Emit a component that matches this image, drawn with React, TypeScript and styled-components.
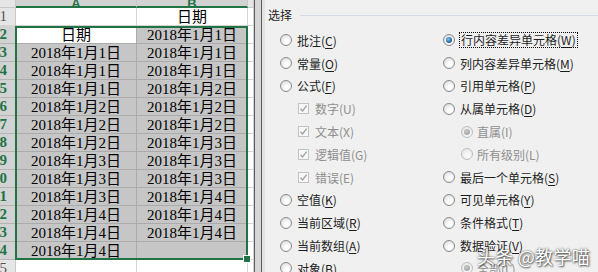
import React from "react";
import styled, { createGlobalStyle } from "styled-components";

const GlobalStyle = createGlobalStyle`
  html, body {
    margin: 0;
    padding: 0;
    background: #ffffff;
  }
`;

const colA = [
  "",
  "日期",
  "2018年1月1日",
  "2018年1月1日",
  "2018年1月1日",
  "2018年1月2日",
  "2018年1月2日",
  "2018年1月2日",
  "2018年1月3日",
  "2018年1月3日",
  "2018年1月3日",
  "2018年1月4日",
  "2018年1月4日",
  "2018年1月4日",
  "",
];

const colB = [
  "日期",
  "2018年1月1日",
  "2018年1月1日",
  "2018年1月1日",
  "2018年1月2日",
  "2018年1月2日",
  "2018年1月2日",
  "2018年1月3日",
  "2018年1月3日",
  "2018年1月3日",
  "2018年1月4日",
  "2018年1月4日",
  "2018年1月4日",
  "",
  "",
];

const GREEN = "#217346";

const Page = styled.div`
  display: flex;
  width: 598px;
  height: 272px;
  overflow: hidden;
  position: relative;
  background: #ffffff;
`;

const Sheet = styled.div`
  position: relative;
  flex: 0 0 254px;
  display: grid;
  grid-template-columns: 16px 121px 111px 6px;
  grid-template-rows: 8px repeat(14, 18px) 18px;
  font-family: "Liberation Serif", "Noto Sans CJK SC", serif;
`;

const Corner = styled.div`
  background: #e6e6e6;
  border-right: 1px solid #c8c8c8;
  border-bottom: 1px solid #c8c8c8;
  box-sizing: border-box;
`;

const ColHead = styled.div<{ $sel?: boolean }>`
  box-sizing: border-box;
  background: ${(p) => (p.$sel ? "#d2d2d2" : "#e6e6e6")};
  border-right: 1px solid #c8c8c8;
  border-bottom: ${(p) => (p.$sel ? `2px solid ${GREEN}` : "1px solid #c8c8c8")};
  color: ${(p) => (p.$sel ? GREEN : "#444")};
  font-family: "Liberation Sans", sans-serif;
  font-weight: bold;
  font-size: 13px;
  display: flex;
  justify-content: center;
  align-items: flex-end;
  overflow: hidden;
  line-height: 13px;
  span {
    margin-bottom: -4px;
  }
`;

const RowHead = styled.div<{ $sel?: boolean }>`
  box-sizing: border-box;
  background: ${(p) => (p.$sel ? "#d2d2d2" : "#e6e6e6")};
  border-right: 1px solid ${(p) => (p.$sel ? GREEN : "#c8c8c8")};
  border-bottom: 1px solid ${(p) => (p.$sel ? "#b4b4b4" : "#d4d4d4")};
  color: ${(p) => (p.$sel ? GREEN : "#555")};
  font-weight: ${(p) => (p.$sel ? "bold" : "normal")};
  font-size: 15px;
  display: flex;
  justify-content: flex-end;
  align-items: center;
  padding-right: 8px;
  overflow: hidden;
  white-space: nowrap;
`;

const Cell = styled.div<{ $sel?: boolean; $active?: boolean }>`
  box-sizing: border-box;
  background: ${(p) => (p.$sel && !p.$active ? "#c6c6c6" : "#ffffff")};
  border-right: 1px solid ${(p) => (p.$sel ? "#ababab" : "#d4d4d4")};
  border-bottom: 1px solid ${(p) => (p.$sel ? "#ababab" : "#d4d4d4")};
  color: #000;
  font-size: 15px;
  display: flex;
  justify-content: center;
  align-items: center;
  white-space: nowrap;
  overflow: hidden;
  line-height: 18px;
`;

const Selection = styled.div`
  position: absolute;
  left: 15px;
  top: 26px;
  width: 233px;
  height: 234px;
  box-sizing: border-box;
  border: 2px solid ${GREEN};
  pointer-events: none;
`;

const FillHandle = styled.div`
  position: absolute;
  right: -5px;
  bottom: -5px;
  width: 6px;
  height: 6px;
  background: ${GREEN};
  border: 1px solid #ffffff;
`;

const Splitter = styled.div`
  flex: 0 0 8px;
  box-sizing: border-box;
  background: #d6d6d6;
  border-left: 1px solid #5c5c5c;
  border-right: 1px solid #5c5c5c;
`;

const Dialog = styled.div`
  flex: 1;
  background: #f0f0f0;
  border-left: 3px solid #e2e2e2;
  padding: 8px 0 0 3px;
  font-family: "Noto Sans CJK SC", "Liberation Sans", sans-serif;
  font-size: 12px;
  color: #1e1e1e;
`;

const Legend = styled.div`
  display: flex;
  align-items: center;
  gap: 8px;
  height: 14px;
  line-height: 14px;
  &::after {
    content: "";
    flex: 1;
    height: 1px;
    background: #d5dce3;
  }
`;

const Options = styled.div`
  display: grid;
  grid-template-columns: 163px 1fr;
  grid-auto-rows: 22.8px;
  margin-top: 7px;
  padding-left: 12px;
`;

const Item = styled.div<{ $indent?: boolean; $disabled?: boolean }>`
  display: flex;
  align-items: center;
  gap: ${(p) => (p.$indent ? "4px" : "5px")};
  padding-left: ${(p) => (p.$indent ? "18px" : "0")};
  color: ${(p) => (p.$disabled ? "#8f8f8f" : "#1e1e1e")};
  white-space: nowrap;
  u {
    text-decoration-thickness: 1px;
    text-underline-offset: 2px;
  }
`;

const Radio = styled.span<{ $checked?: boolean; $disabled?: boolean }>`
  position: relative;
  flex: 0 0 12px;
  width: 12px;
  height: 12px;
  box-sizing: border-box;
  border-radius: 50%;
  border: 1px solid ${(p) => (p.$disabled ? "#bdbdbd" : "#8a8a8a")};
  background: ${(p) =>
    p.$disabled
      ? "radial-gradient(circle at 60% 65%, #fafafa, #e4e4e4)"
      : "radial-gradient(circle at 60% 65%, #ffffff 20%, #d8d8d8 90%)"};
  &::after {
    content: "";
    display: ${(p) => (p.$checked ? "block" : "none")};
    position: absolute;
    left: 2px;
    top: 2px;
    width: 6px;
    height: 6px;
    border-radius: 50%;
    background: ${(p) =>
      p.$disabled
        ? "radial-gradient(circle at 40% 35%, #c8c8c8, #9a9a9a)"
        : "radial-gradient(circle at 40% 35%, #7cc4f0, #1a5f95 70%, #0c3c63)"};
  }
`;

const Check = styled.span`
  flex: 0 0 11px;
  width: 11px;
  height: 11px;
  box-sizing: border-box;
  border: 1px solid #c3c3c3;
  background: #f7f7f7;
  display: flex;
  align-items: center;
  justify-content: center;
  margin-right: 2px;
`;

const Focus = styled.span`
  outline: 1px dotted #000;
  outline-offset: 0;
  padding: 0 1px;
  line-height: 14px;
`;

const Watermark = styled.div`
  position: absolute;
  right: 8px;
  bottom: 3px;
  font-family: "Noto Sans CJK SC", sans-serif;
  font-size: 18px;
  color: #ffffff;
  letter-spacing: 0.3px;
  text-shadow: 0 0 2px rgba(0, 0, 0, 0.7), 1px 1px 2px rgba(0, 0, 0, 0.6);
  white-space: nowrap;
`;

const CheckMark = () => (
  <svg width="9" height="9" viewBox="0 0 9 9">
    <path d="M1.5 4.8 L3.6 7 L7.6 1.6" fill="none" stroke="#a2a2a2" strokeWidth="1.3" />
  </svg>
);

type Opt = {
  label: string;
  key?: string;
  kind: "radio" | "check";
  indent?: boolean;
  disabled?: boolean;
  checked?: boolean;
  focus?: boolean;
};

const left: Opt[] = [
  { label: "批注", key: "C", kind: "radio" },
  { label: "常量", key: "O", kind: "radio" },
  { label: "公式", key: "F", kind: "radio" },
  { label: "数字(U)", kind: "check", indent: true, disabled: true },
  { label: "文本(X)", kind: "check", indent: true, disabled: true },
  { label: "逻辑值(G)", kind: "check", indent: true, disabled: true },
  { label: "错误(E)", kind: "check", indent: true, disabled: true },
  { label: "空值", key: "K", kind: "radio" },
  { label: "当前区域", key: "R", kind: "radio" },
  { label: "当前数组", key: "A", kind: "radio" },
  { label: "对象", key: "B", kind: "radio" },
];

const right: Opt[] = [
  { label: "行内容差异单元格", key: "W", kind: "radio", checked: true, focus: true },
  { label: "列内容差异单元格", key: "M", kind: "radio" },
  { label: "引用单元格", key: "P", kind: "radio" },
  { label: "从属单元格", key: "D", kind: "radio" },
  { label: "直属(I)", kind: "radio", indent: true, disabled: true, checked: true },
  { label: "所有级别(L)", kind: "radio", indent: true, disabled: true },
  { label: "最后一个单元格", key: "S", kind: "radio" },
  { label: "可见单元格", key: "Y", kind: "radio" },
  { label: "条件格式", key: "T", kind: "radio" },
  { label: "数据验证", key: "V", kind: "radio" },
  { label: "全部(L)", kind: "radio", indent: true, disabled: true, checked: true },
];

const OptionItem = ({ o }: { o: Opt }) => {
  const text = o.key ? (
    <span>
      {o.label}(<u>{o.key}</u>)
    </span>
  ) : (
    <span>{o.label}</span>
  );
  return (
    <Item $indent={o.indent} $disabled={o.disabled}>
      {o.kind === "radio" ? (
        <Radio $checked={o.checked} $disabled={o.disabled} />
      ) : (
        <Check>
          <CheckMark />
        </Check>
      )}
      {o.focus ? <Focus>{text}</Focus> : text}
    </Item>
  );
};

export default function App() {
  const rows = colA.map((a, i) => {
    const r = i + 1;
    const sel = r >= 2 && r <= 14;
    return (
      <React.Fragment key={r}>
        <RowHead $sel={sel}>{r}</RowHead>
        <Cell $sel={sel} $active={r === 2}>
          {a}
        </Cell>
        <Cell $sel={sel}>{colB[i]}</Cell>
        <Cell />
      </React.Fragment>
    );
  });

  return (
    <>
      <GlobalStyle />
      <Page>
        <Sheet>
          <Corner />
          <ColHead $sel>
            <span>A</span>
          </ColHead>
          <ColHead $sel>
            <span>B</span>
          </ColHead>
          <ColHead />
          {rows}
          <Selection>
            <FillHandle />
          </Selection>
        </Sheet>
        <Splitter />
        <Dialog>
          <Legend>选择</Legend>
          <Options>
            {left.map((o, i) => (
              <React.Fragment key={i}>
                <OptionItem o={o} />
                <OptionItem o={right[i]} />
              </React.Fragment>
            ))}
          </Options>
        </Dialog>
        <Watermark>头条 @教学喵</Watermark>
      </Page>
    </>
  );
}
